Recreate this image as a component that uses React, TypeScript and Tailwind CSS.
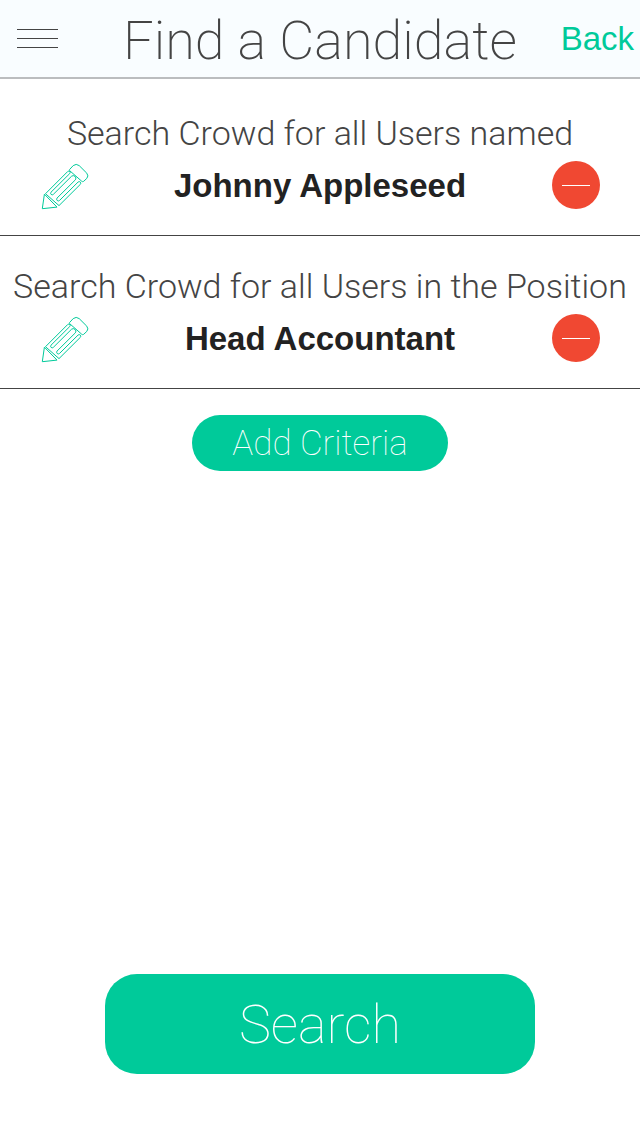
type Criterion = { label: string; value: string };

const criteria: Criterion[] = [
  { label: "Search Crowd for all Users named", value: "Johnny Appleseed" },
  { label: "Search Crowd for all Users in the Position", value: "Head Accountant" },
];

function PencilIcon() {
  return (
    <svg
      viewBox="-1 0 48 48"
      className="size-12 overflow-visible"
      fill="none"
      stroke="#00ca9a"
      strokeWidth="1"
      strokeLinejoin="round"
      aria-hidden="true"
    >
      <path d="M28.5 6.6 32.2 2.6Q35.2 .2 38.2 2.6L45.8 10.2Q48 13 45.8 15.4L42.6 18.4Q41.6 19.1 40.7 18.2L28.6 7.6Q28.1 7.1 28.5 6.6Z" />
      <path d="M4.5 30.7 26.6 8.6Q27.8 7.6 28.8 8.6Q29.7 9.6 28.7 10.6L10 29.2Q9.1 30.3 10.1 31.4Q11.3 32.4 12.4 31.3L30.6 13.2Q32.3 11.9 34.1 13.4Q35.7 15 34.4 16.8L16 35.1Q15.1 36.2 16.2 37.5Q17.4 38.5 18.6 37.4L37.1 19Q38.3 18.1 39.4 19.2Q40.2 20.3 39.3 21.4L18 42.6Z" />
      <path d="M3.4 31.2 1.3 45.7 16 44.1Z" />
    </svg>
  );
}

function CriterionRow({ label, value }: Criterion) {
  return (
    <li className="border-b border-[#444] pt-8 pb-[26px]">
      <p className="mb-2.5 text-center text-[34px] leading-9 font-light whitespace-nowrap">{label}</p>
      <div className="flex h-12 items-center justify-between px-10">
        <button type="button" aria-label={`Edit ${value}`} className="pt-1">
          <PencilIcon />
        </button>
        <strong className="pt-0.5 font-['Liberation_Sans',sans-serif] text-[33px] leading-12 font-bold text-[#222]">
          {value}
        </strong>
        <button
          type="button"
          aria-label={`Remove ${value}`}
          className="flex size-12 items-center justify-center rounded-full bg-[#f04832]"
        >
          <span className="h-px w-7 bg-white" />
        </button>
      </div>
    </li>
  );
}

export default function App() {
  return (
    <div className="flex min-h-screen flex-col bg-white font-[Roboto,sans-serif] text-[#444]">
      <header className="grid grid-cols-[1fr_auto_1fr] items-center border-b-2 border-[#bbbdbf] bg-[#f9fdff] px-1.5">
        <button type="button" aria-label="Menu" className="ml-[11px] flex w-[41px] flex-col gap-2 justify-self-start">
          <span className="h-px w-full bg-[#444]" />
          <span className="h-px w-full bg-[#444]" />
          <span className="h-px w-full bg-[#444]" />
        </button>
        <h1 className="pt-1 text-[54px] leading-[73px] font-extralight whitespace-nowrap">Find a Candidate</h1>
        <a
          href="#back"
          className="justify-self-end font-['Liberation_Sans',sans-serif] text-[33px] leading-[77px] text-[#00ca9a]"
        >
          Back
        </a>
      </header>

      <main className="flex flex-1 flex-col items-center">
        <ul className="w-full pt-1">
          {criteria.map((item) => (
            <CriterionRow key={item.value} {...item} />
          ))}
        </ul>

        <button
          type="button"
          className="mt-[26px] h-14 rounded-full bg-[#00ca9a] px-10 pt-0.5 text-[35px] leading-[54px] font-thin text-white"
        >
          Add Criteria
        </button>

        <button
          type="button"
          className="mt-auto mb-[62px] h-[100px] w-full max-w-[430px] rounded-[32px] bg-[#00ca9a] pt-0.5 text-[54px] leading-[98px] font-thin text-white"
        >
          Search
        </button>
      </main>
    </div>
  );
}
